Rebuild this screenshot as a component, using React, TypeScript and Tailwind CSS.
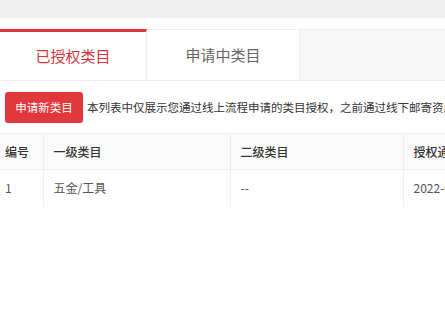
const TABS = ['已授权类目', '申请中类目']

const COLS = [
  { name: '编号', w: 'w-[43px]' },
  { name: '一级类目', w: 'w-[187px]' },
  { name: '二级类目', w: 'w-[173px]' },
  { name: '授权通过时间', w: 'w-[160px]' },
]

const ROWS = [['1', '五金/工具', '--', '2022-05-18 10:32:11']]

export default function App() {
  return (
    <div className="w-[445px] h-[322px] overflow-hidden bg-white font-['Microsoft_YaHei','Noto_Sans_CJK_SC',sans-serif]">
      {/* top strip */}
      <div className="h-[18px] bg-[#efefef]" />
      <div className="h-[11px]" />

      {/* tabs */}
      <div className="flex h-[52px] border-b border-[#ececec]">
        {TABS.map((t, i) => (
          <div
            key={t}
            className={`flex items-center justify-center text-[15px] ${
              i === 0
                ? 'w-[147px] border-t-[3px] border-t-[#e0353b] border-r border-r-[#eeeeee] text-[#d1353c]'
                : 'w-[153px] border-t border-t-[#eeeeee] border-r border-r-[#eeeeee] text-[#666666]'
            }`}
          >
            {t}
          </div>
        ))}
        <div className="flex-1 bg-[#f8f8f8] border-t border-[#eeeeee]" />
      </div>

      {/* action row */}
      <div className="flex items-center mt-[11px] pl-[5px] whitespace-nowrap">
        <button className="shrink-0 w-[78px] h-[31px] rounded-[3px] bg-[#e0383c] text-white text-[11.5px]">
          申请新类目
        </button>
        <span className="ml-[4px] text-[11.5px] text-[#333333]">
          本列表中仅展示您通过线上流程申请的类目授权，之前通过线下邮寄资质申请的类目授权请联系客服查询
        </span>
      </div>

      {/* table */}
      <table className="mt-[10px] table-fixed border-collapse w-[563px] text-[12px]">
        <thead>
          <tr className="h-[36px] bg-[#fbfbfb] border-t border-[#eeeeee]">
            {COLS.map((c, i) => (
              <th
                key={c.name}
                className={`${c.w} text-left font-medium text-[#333333] whitespace-nowrap border-b border-[#eeeeee] ${
                  i === 0 ? 'pl-[5px]' : 'pl-[10px] border-l'
                }`}
              >
                {c.name}
              </th>
            ))}
          </tr>
        </thead>
        <tbody>
          {ROWS.map((r) => (
            <tr key={r[0]} className="h-[37px]">
              {r.map((v, i) => (
                <td
                  key={i}
                  className={`text-[#555555] whitespace-nowrap ${
                    i === 0 ? 'pl-[5px]' : 'pl-[10px] border-l border-[#eeeeee]'
                  }`}
                >
                  {v}
                </td>
              ))}
            </tr>
          ))}
        </tbody>
      </table>
    </div>
  )
}
